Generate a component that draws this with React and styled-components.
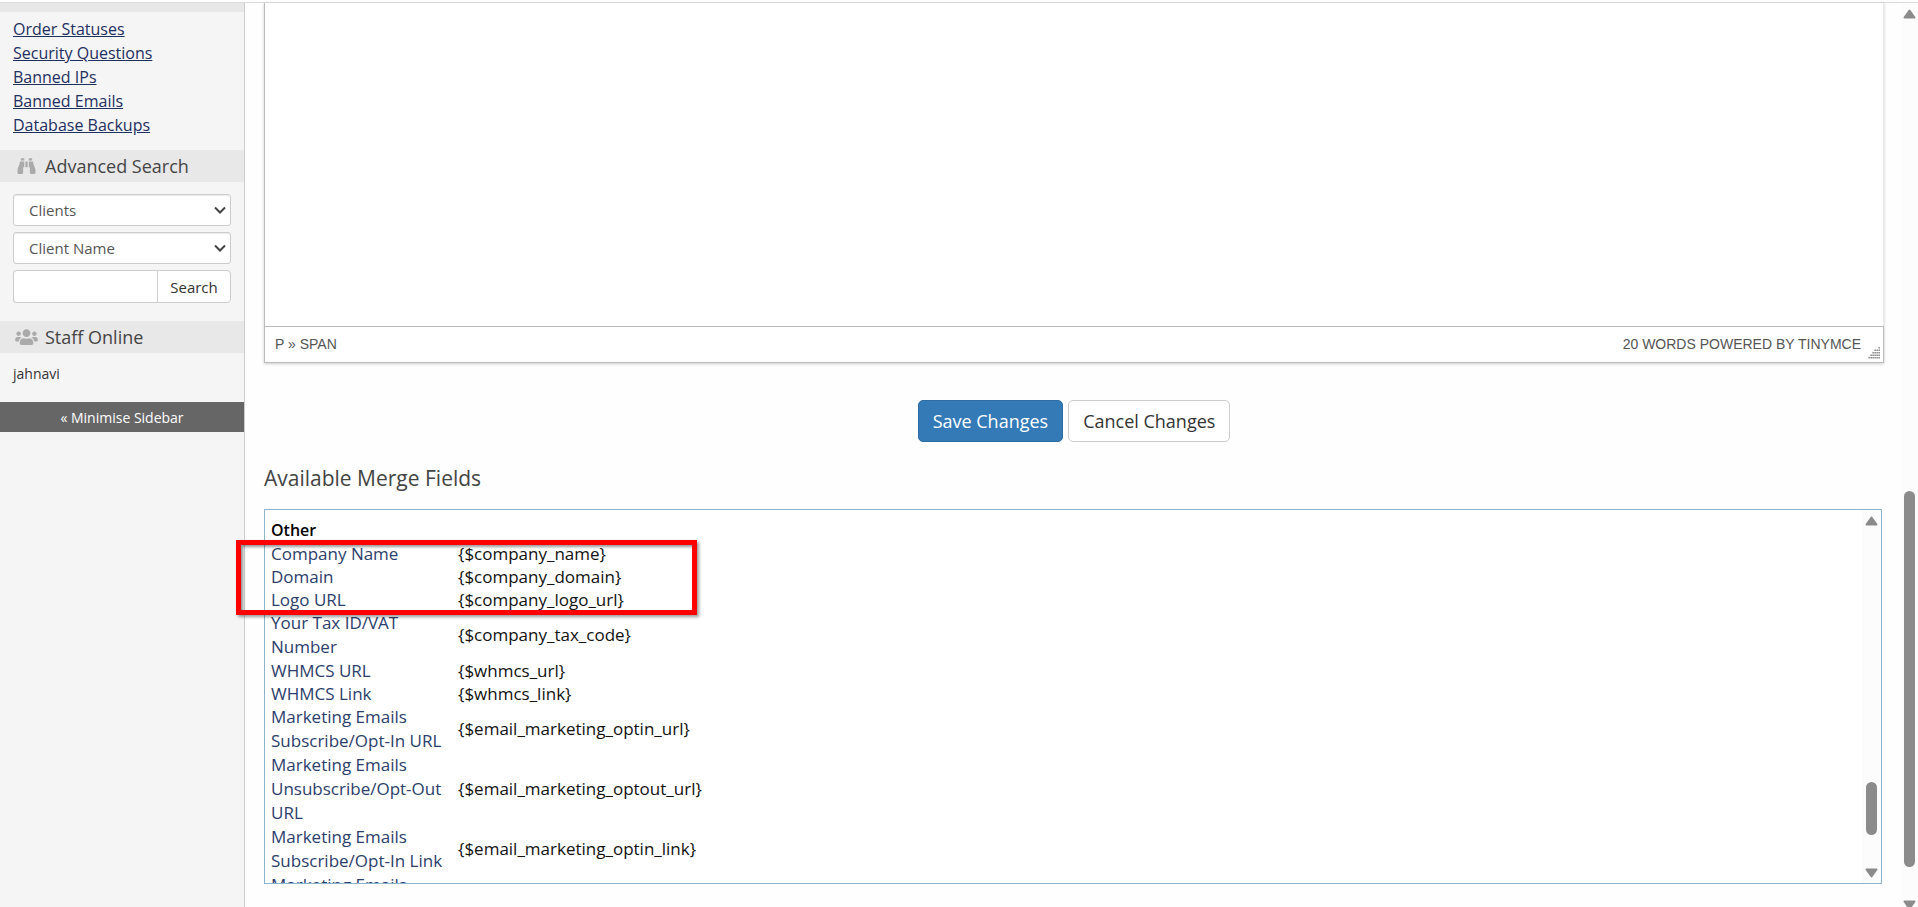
import React, { useState } from "react";
import styled, { createGlobalStyle } from "styled-components";
import { FaBinoculars, FaUsers } from "react-icons/fa";

const GlobalStyle = createGlobalStyle`
  * {
    box-sizing: border-box;
  }
  body {
    margin: 0;
    overflow: hidden;
    background-color: #fefefe;
    font-family: "Open Sans", "Noto Sans", sans-serif;
    font-size: 16px;
    color: #333;
  }
  button, input, select {
    font-family: inherit;
    margin: 0;
  }
`;

const Page = styled.div`
  display: flex;
  height: 100vh;
  overflow: hidden;
  padding-top: 2px;
`;

const Frame = styled.div`
  display: flex;
  flex: 1;
  min-width: 0;
  border-top: 1px solid #dcdcdc;
`;

const Sidebar = styled.aside`
  flex: 0 0 245px;
  min-width: 0;
  background-color: #f5f5f5;
  border-right: 1px solid #ccc;
`;

const HiddenHeader = styled.div`
  height: 9px;
  background-color: #e8e8e8;
`;

const SidebarHeader = styled.h2`
  display: flex;
  align-items: center;
  gap: 7px;
  height: 32px;
  margin: 0;
  padding-left: 15px;
  background-color: #e8e8e8;
  color: #444;
  font-size: 18px;
  font-weight: 500;

  svg {
    width: 23px;
    height: 18px;
    color: #aaa;
  }
`;

const Menu = styled.ul`
  list-style: none;
  margin: 0;
  padding: 5px 13px 13px;
`;

const MenuItem = styled.li`
  line-height: 24px;
`;

const MenuLink = styled.a`
  color: #1f2f5f;
  text-decoration: underline;
`;

const SearchForm = styled.form`
  display: flex;
  flex-direction: column;
  gap: 6px;
  padding: 12px 13px 18px;
`;

const SelectWrap = styled.div`
  position: relative;

  svg {
    position: absolute;
    right: 5px;
    top: 12px;
    pointer-events: none;
  }
`;

const Select = styled.select`
  display: block;
  width: 100%;
  height: 32px;
  padding: 0 15px;
  appearance: none;
  border: 1px solid #ccc;
  border-radius: 3px;
  background-color: #fff;
  box-shadow: inset 0 1px 1px rgba(0, 0, 0, 0.08);
  color: #555;
  font-size: 15px;
`;

const SearchGroup = styled.div`
  display: flex;
  height: 33px;
`;

const SearchInput = styled.input`
  flex: 1;
  width: 100%;
  min-width: 0;
  border: 1px solid #ccc;
  border-right: none;
  border-radius: 4px 0 0 4px;
  background-color: #fff;
  outline: none;
`;

const SearchButton = styled.button`
  flex: 0 0 74px;
  border: 1px solid #ccc;
  border-radius: 0 4px 4px 0;
  background-color: #fff;
  color: #333;
  font-size: 15px;
  cursor: pointer;
`;

const StaffList = styled.p`
  margin: 0;
  padding: 11px 13px 18px;
  font-size: 14px;
  line-height: 20px;
`;

const Minimise = styled.button`
  display: block;
  width: 100%;
  height: 30px;
  border: none;
  background-color: #666;
  color: #fff;
  font-size: 14px;
  cursor: pointer;
`;

const Main = styled.main`
  flex: 1;
  min-width: 0;
  padding: 0 17px 0 19px;
`;

const Editor = styled.section`
  box-shadow: 0 1px 3px rgba(0, 0, 0, 0.2);
`;

const EditorArea = styled.div`
  height: 323px;
  border-left: 1px solid #bbb;
  border-right: 1px solid #e8e8e8;
  background-color: #fff;
`;

const StatusBar = styled.div`
  display: flex;
  align-items: center;
  justify-content: space-between;
  position: relative;
  height: 37px;
  padding: 0 22px 2px 10px;
  border: 1px solid #bbb;
  background-color: #fff;
  color: #555;
  font-family: "Liberation Sans", Arial, sans-serif;
  font-size: 14px;
`;

const ResizeGrip = styled.svg`
  position: absolute;
  right: 3px;
  bottom: 3px;
`;

const Actions = styled.div`
  display: flex;
  justify-content: center;
  gap: 5px;
  padding: 37px 0 21px;
`;

const Button = styled.button`
  height: 42px;
  padding: 0 14px;
  border: 1px solid ${({ $primary }) => ($primary ? "#2e6da4" : "#ccc")};
  border-radius: 5px;
  background-color: ${({ $primary }) => ($primary ? "#337ab7" : "#fff")};
  color: ${({ $primary }) => ($primary ? "#fff" : "#333")};
  font-size: 18px;
  cursor: pointer;
`;

const Title = styled.h1`
  margin: 0;
  padding-bottom: 16px;
  color: #444;
  font-size: 21px;
  font-weight: 400;
  line-height: 30px;
`;

const MergeWrap = styled.div`
  position: relative;
  margin-right: 2px;
`;

const MergePanel = styled.div`
  display: flex;
  height: 375px;
  overflow: hidden;
  border: 1px solid #8cb4cc;
  background-color: #fff;
`;

const MergeContent = styled.div`
  flex: 1;
  padding: 8px 6px 0;
`;

const Highlight = styled.div`
  position: absolute;
  left: -28px;
  top: 31px;
  width: 461px;
  height: 75px;
  border: 5px solid #fe0000;
  box-shadow: 2px 2px 3px rgba(0, 0, 0, 0.4), inset 2px 2px 3px rgba(0, 0, 0, 0.4);
  pointer-events: none;
`;

const FieldTable = styled.table`
  border-collapse: collapse;
  color: #111;
  font-size: 17px;

  caption {
    color: #000;
    font-size: 16px;
    font-weight: 600;
    line-height: 24px;
    text-align: left;
  }
`;

const FieldCell = styled.td`
  padding: 0;
  line-height: ${({ $wrapped }) => ($wrapped ? 24 : 23)}px;
  vertical-align: middle;
`;

const LabelCell = styled(FieldCell)`
  width: 187px;
  padding-right: 12px;
`;

const FieldLink = styled.a`
  color: #2c3e6b;
  text-decoration: none;
`;

const ScrollColumn = styled.div`
  display: flex;
  flex-direction: column;
  align-items: center;
  flex: 0 0 ${({ $width }) => $width}px;
  padding: 6px 0 ${({ $bottom }) => $bottom}px;
  background-color: #fcfcfc;

  svg {
    flex-shrink: 0;
  }
`;

const Track = styled.div`
  display: flex;
  flex-direction: column;
  flex: 1;
  width: 11px;
`;

const Gap = styled.div`
  flex: ${({ $grow }) => $grow} 1 0;
`;

const Thumb = styled(Gap)`
  border-radius: 6px;
  background-color: #8b8b8b;
`;

const menuLinks = [
  "Order Statuses",
  "Security Questions",
  "Banned IPs",
  "Banned Emails",
  "Database Backups",
];

const mergeFields = [
  { label: "Company Name", value: "{$company_name}" },
  { label: "Domain", value: "{$company_domain}" },
  { label: "Logo URL", value: "{$company_logo_url}" },
  { label: "Your Tax ID/VAT Number", value: "{$company_tax_code}", wrapped: true },
  { label: "WHMCS URL", value: "{$whmcs_url}" },
  { label: "WHMCS Link", value: "{$whmcs_link}" },
  { label: "Marketing Emails Subscribe/Opt-In URL", value: "{$email_marketing_optin_url}", wrapped: true },
  { label: "Marketing Emails Unsubscribe/Opt-Out URL", value: "{$email_marketing_optout_url}", wrapped: true },
  { label: "Marketing Emails Subscribe/Opt-In Link", value: "{$email_marketing_optin_link}", wrapped: true },
  { label: "Marketing Emails Unsubscribe/Opt-Out Link", value: "{$email_marketing_optout_link}", wrapped: true },
];

// dots per row of the resize grip, top to bottom
const gripRows = [1, 3, 4, 5, 6];

const Chevron = () => (
  <svg width="12" height="9" viewBox="0 0 12 9" fill="none" stroke="#444" strokeWidth="2">
    <path d="M1 1.5L6 6.5L11 1.5" />
  </svg>
);

const Scrollbar = ({ before, size, after, width = 19, bottom = 0, arrowHeight = 10 }) => (
  <ScrollColumn $width={width} $bottom={bottom} aria-hidden="true">
    <svg width="13" height="10" viewBox="0 0 13 10">
      <path d="M6.5 1.5L11.5 8.5H1.5Z" fill="#8b8b8b" stroke="#8b8b8b" strokeWidth="2" strokeLinejoin="round" />
    </svg>
    <Track>
      <Gap $grow={before} />
      <Thumb $grow={size} />
      <Gap $grow={after} />
    </Track>
    <svg width="13" height={arrowHeight} viewBox={`0 0 13 ${arrowHeight}`}>
      <path d="M6.5 8.5L11.5 1.5H1.5Z" fill="#8b8b8b" stroke="#8b8b8b" strokeWidth="2" strokeLinejoin="round" />
    </svg>
  </ScrollColumn>
);

const App = () => {
  const [type, setType] = useState("Clients");
  const [field, setField] = useState("Client Name");
  const [q, setQ] = useState("");

  return (
    <>
      <GlobalStyle />
      <Page>
        <Frame>
          <Sidebar>
            <HiddenHeader />
            <Menu>
              {menuLinks.map((name) => (
                <MenuItem key={name}>
                  <MenuLink href="#">{name}</MenuLink>
                </MenuItem>
              ))}
            </Menu>
            <SidebarHeader>
              <FaBinoculars />
              Advanced Search
            </SidebarHeader>
            <SearchForm onSubmit={(e) => e.preventDefault()}>
              <SelectWrap>
                <Select aria-label="Search type" value={type} onChange={(e) => setType(e.target.value)}>
                  <option>Clients</option>
                  <option>Orders</option>
                  <option>Services</option>
                </Select>
                <Chevron />
              </SelectWrap>
              <SelectWrap>
                <Select aria-label="Search field" value={field} onChange={(e) => setField(e.target.value)}>
                  <option>Client Name</option>
                  <option>Email Address</option>
                </Select>
                <Chevron />
              </SelectWrap>
              <SearchGroup>
                <SearchInput aria-label="Search value" value={q} onChange={(e) => setQ(e.target.value)} />
                <SearchButton type="submit">Search</SearchButton>
              </SearchGroup>
            </SearchForm>
            <SidebarHeader>
              <FaUsers />
              Staff Online
            </SidebarHeader>
            <StaffList>jahnavi</StaffList>
            <Minimise type="button">« Minimise Sidebar</Minimise>
          </Sidebar>
          <Main>
            <Editor>
              <EditorArea />
              <StatusBar>
                <span>P » SPAN</span>
                <span>20 WORDS POWERED BY TINYMCE</span>
                <ResizeGrip width="12" height="12" viewBox="0 0 12 12" fill="#777">
                  {gripRows.map((count, row) =>
                    Array.from({ length: count }, (_, i) => (
                      <rect key={`${row}-${i}`} x={10.5 - i * 2} y={row * 2.5} width="1.3" height="1.5" />
                    ))
                  )}
                </ResizeGrip>
              </StatusBar>
            </Editor>
            <Actions>
              <Button type="button" $primary>Save Changes</Button>
              <Button type="button">Cancel Changes</Button>
            </Actions>
            <Title>Available Merge Fields</Title>
            <MergeWrap>
              <MergePanel>
                <MergeContent>
                  <FieldTable>
                    <caption>Other</caption>
                    <tbody>
                      {mergeFields.map(({ label, value, wrapped }) => (
                        <tr key={value}>
                          <LabelCell $wrapped={wrapped}>
                            <FieldLink href="#">{label}</FieldLink>
                          </LabelCell>
                          <FieldCell $wrapped={wrapped}>{value}</FieldCell>
                        </tr>
                      ))}
                    </tbody>
                  </FieldTable>
                </MergeContent>
                <Scrollbar before={257} size={53} after={33} bottom={5} />
              </MergePanel>
              <Highlight />
            </MergeWrap>
          </Main>
          <Scrollbar before={472} size={376} after={33} width={17} arrowHeight={7} />
        </Frame>
      </Page>
    </>
  );
};

export default App;
